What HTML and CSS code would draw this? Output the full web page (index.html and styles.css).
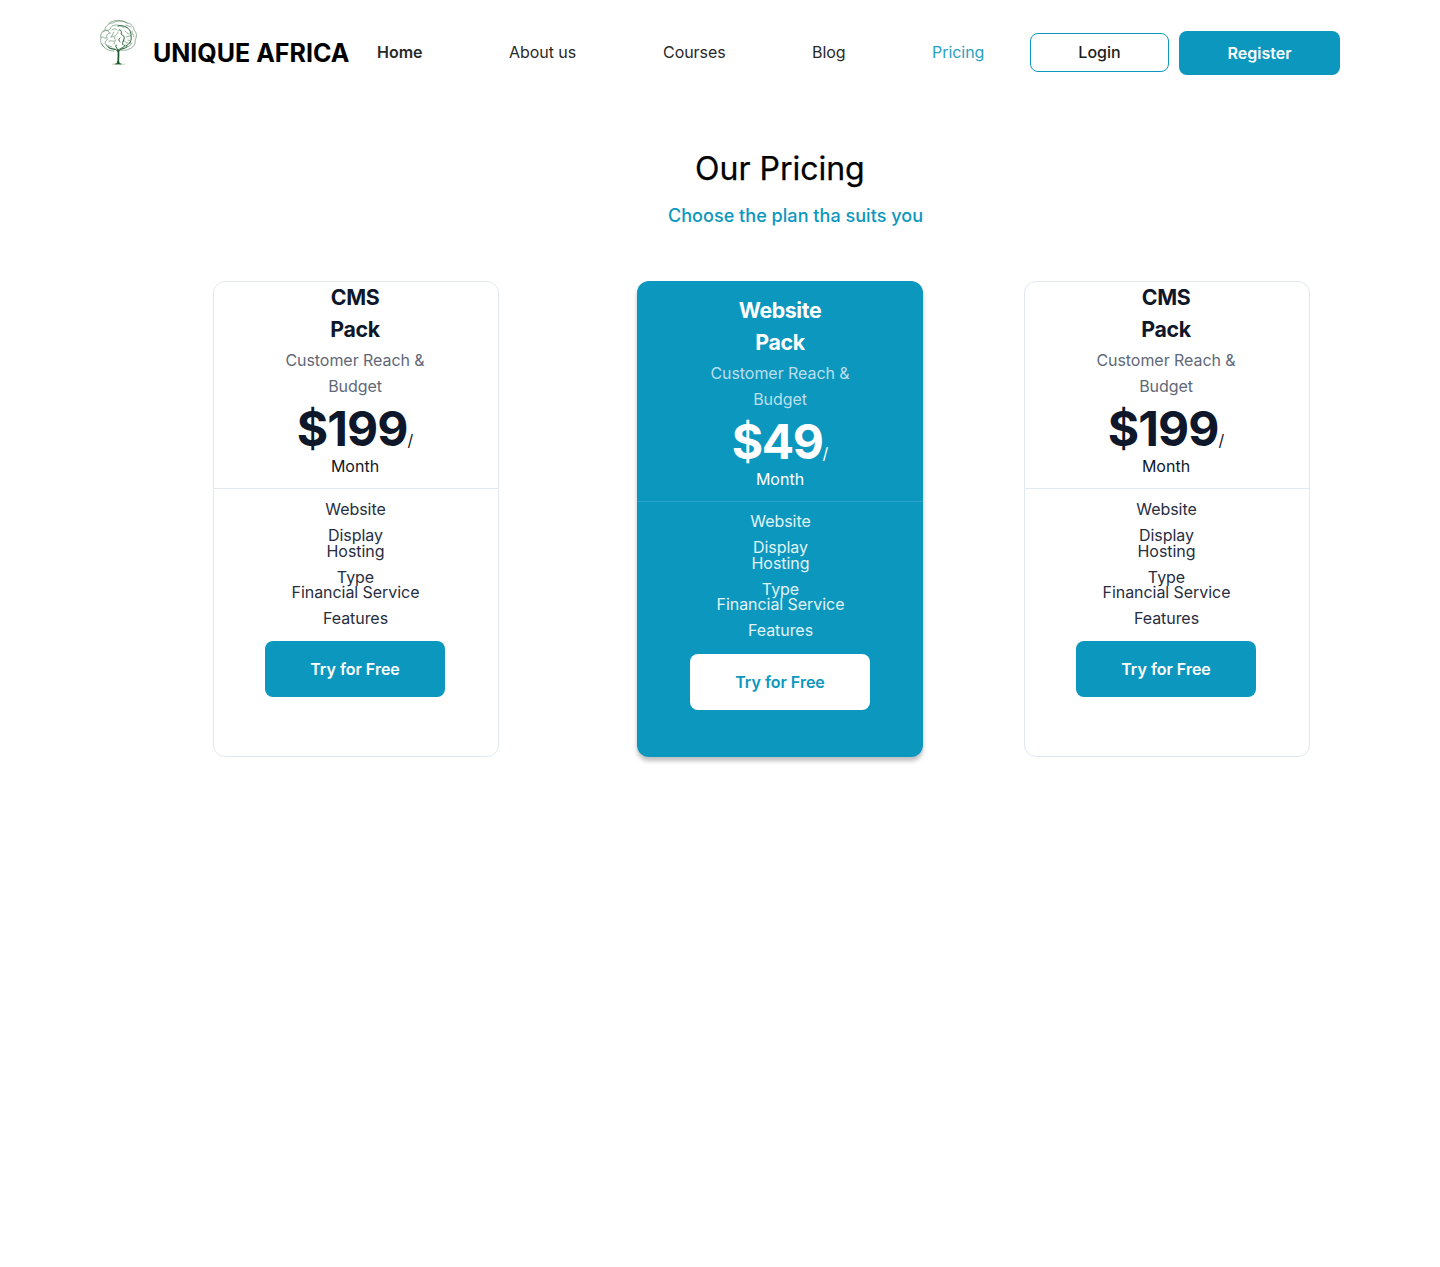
FILE: index.html
```html
<!DOCTYPE html>
<html lang="en">
<head>
<meta charset="utf-8">
<title>Unique Africa - Pricing</title>
<link rel="stylesheet" href="styles.css">
</head>
<body>
<header class="header">
  <a class="brand">
    <svg class="brand-tree" viewBox="0 0 40 48" fill="none" stroke="#1d5a2c" stroke-linecap="round" stroke-linejoin="round">
      <g stroke-width=".65" opacity=".72">
        <path d="M6 29C3 27 2 23 3 20c-1-4 1-7 4-8 0-4 4-7 8-7 4-3 11-2 14 0 4 0 7 4 7 7 3 3 3 7 1 10 1 4-2 8-6 9-3 2-6 1-9 1"/>
        <path d="M4 26c2 5 7 7 12 7M3 19c2-1 3 2 5 1M8 12c3 1 5-1 5-3M11 5c4-3 13-4 18 0M14 8c4-2 9-1 12 2"/>
        <path d="M5 14c3-3 6-1 7 1M12 15c-3 0-4 3-3 5s-2 3-2 5 4 3 7 4M14 12c2-2 4-1 5 0M16 14c-2 2-1 4-3 5M13 19c2-1 4 0 4 2M11 23c2-1 3 1 5 0M16 26c1-2 0-3 2-4M20 14c0 3-4 2-3 5"/>
        <path d="M27 13c2 1 2 3 4 3M28 19c2-1 4 0 5-2M30 22c2 0 3 2 2 4M34 13c-1 3 2 3 2 6M25 23c3-1 2 3 5 2M17 31c-4 0-7-1-9-4M28 29c3 0 5-2 6-4M33 9c-2 0-3-2-5-2"/>
      </g>
      <g stroke-width=".95">
        <path d="M21 12c2-1 3 2 2 4 2 1 4 3 3 5-1 3-2 4-1 6M22 20c-2 1-1 3 0 4M28 9c4 2 5 5 5 9 1 4-1 8-5 10M20 8c3-1 6 0 8 1"/>
        <path d="M20 33c-2-3-8-1-10-4M20 33c0-3-3-3-2-6M20 33c2-4 6-2 7-6M21 33c2-3 6-2 8-4"/>
      </g>
      <path d="M20.3 32c.4 4 .1 9-.2 13" stroke-width="1.7"/>
      <path d="M17.5 46c2-.3 2-1.500 2.300-3h1c.2 1.500.6 2.700 2.200 3z" fill="#1d5a2c" stroke-width=".5"/>
      <path d="M14.500 46.200h12" stroke-width=".5" opacity=".6"/>
    </svg>
    <span class="brand-name">UNIQUE AFRICA</span>
  </a>
  <nav class="nav">
    <a class="nav-link nav-home">Home</a>
    <a class="nav-link nav-about">About us</a>
    <a class="nav-link nav-courses">Courses</a>
    <a class="nav-link nav-blog">Blog</a>
    <a class="nav-link nav-pricing">Pricing</a>
  </nav>
  <div class="actions">
    <button class="login">Login</button>
    <button class="register">Register</button>
  </div>
</header>
<main>
  <div class="intro">
    <h1 class="intro-title">Our Pricing</h1>
    <p class="intro-text">Choose the plan tha suits you</p>
  </div>
  <section class="plans">
    <article class="plan">
      <h2 class="plan-name">CMS<br>Pack</h2>
      <p class="plan-desc">Customer Reach &amp;<br>Budget</p>
      <p class="plan-price"><strong class="amount">$199</strong>/</p>
      <p class="plan-period">Month</p>
      <ul class="features">
        <li>Website<br>Display</li>
        <li>Hosting<br>Type</li>
        <li>Financial Service<br>Features</li>
      </ul>
      <button class="try">Try for Free</button>
    </article>
    <article class="plan plan-featured">
      <h2 class="plan-name">Website<br>Pack</h2>
      <p class="plan-desc">Customer Reach &amp;<br>Budget</p>
      <p class="plan-price"><strong class="amount">$49</strong>/</p>
      <p class="plan-period">Month</p>
      <ul class="features">
        <li>Website<br>Display</li>
        <li>Hosting<br>Type</li>
        <li>Financial Service<br>Features</li>
      </ul>
      <button class="try">Try for Free</button>
    </article>
    <article class="plan">
      <h2 class="plan-name">CMS<br>Pack</h2>
      <p class="plan-desc">Customer Reach &amp;<br>Budget</p>
      <p class="plan-price"><strong class="amount">$199</strong>/</p>
      <p class="plan-period">Month</p>
      <ul class="features">
        <li>Website<br>Display</li>
        <li>Hosting<br>Type</li>
        <li>Financial Service<br>Features</li>
      </ul>
      <button class="try">Try for Free</button>
    </article>
  </section>
</main>
</body>
</html>
```
FILE: styles.css
```css
* { box-sizing: border-box; margin: 0; padding: 0; }

body {
  min-height: 1267px;
  background: #fff;
  color: #0f172a;
  font: 400 16px/26px Inter, "Liberation Sans", sans-serif;
}

button { border: 0; font: inherit; }

.header {
  display: flex;
  height: 106px;
  padding-left: 98px;
  white-space: nowrap;
}

.brand { display: flex; width: 279px; }
.brand-tree { width: 40px; height: 48px; margin-top: 18px; }
.brand-name {
  margin: 37px 0 0 15px;
  color: #000;
  font-size: 25px;
  font-weight: 700;
  line-height: 32px;
}

.nav {
  display: grid;
  grid-template-columns: 132px 154px 149px 120px 98px;
  padding-top: 39px;
}
.nav-link { color: #292929; letter-spacing: -.05px; }
.nav-home { font-weight: 600; letter-spacing: 0; }
.nav-pricing { color: #2aa0c4; }

.actions { display: flex; gap: 10px; align-items: flex-start; padding-top: 31px; }
.login {
  width: 139px;
  height: 39px;
  margin-top: 2px;
  padding-bottom: 2px;
  border: 1px solid #0c97bf;
  border-radius: 8px;
  background: #fff;
  color: #1c1c1c;
  font-weight: 500;
}
.register {
  width: 161px;
  height: 44px;
  border-radius: 8px;
  background: #0c97bf;
  color: #fff;
  font-weight: 600;
}

.intro { display: grid; padding: 42px 0 0 668px; }
.intro-title {
  margin-left: 27px;
  color: #000;
  font-size: 32px;
  font-weight: 400;
  line-height: 42px;
  -webkit-text-stroke: .25px #000;
}
.intro-text {
  margin-top: 13px;
  color: #0c97bf;
  font-size: 18px;
  font-weight: 500;
  letter-spacing: .04px;
}

.plans {
  display: grid;
  grid-template-columns: 286px 286px 286px;
  column-gap: 138px;
  padding: 52px 0 0 213px;
}
.plan:last-child { margin-left: -37px; margin-right: 37px; }

.plan {
  display: flex;
  flex-direction: column;
  align-items: center;
  height: 476px;
  padding-right: 2px;
  border: 1px solid #e2e8f0;
  border-radius: 12px;
  text-align: center;
}
.plan-name {
  margin-top: -1px;
  font-size: 21.33px;
  font-weight: 700;
  line-height: 32px;
  letter-spacing: -.4px;
}
.plan-desc {
  margin-top: 2px;
  color: #5f6878;
  letter-spacing: -.06px;
}
.plan-price { height: 54px; line-height: 59px; }
.amount {
  font-size: 48px;
  font-weight: 700;
  letter-spacing: -.96px;
}
.plan-period {
  align-self: stretch;
  height: 36px;
  margin-right: -2px;
  padding-right: 2px;
  border-bottom: 1px solid #e2e8f0;
}
.features {
  padding: 7px 0 0 1px;
  color: #272e3f;
  letter-spacing: -.05px;
  list-style: none;
}
.features li { height: 41.5px; }
.try {
  width: 180px;
  height: 56px;
  margin-top: 20px;
  border-radius: 8px;
  background: #0c97bf;
  color: #fff;
  font-weight: 600;
}

.plan-featured {
  padding-top: 14px;
  padding-right: 0;
  border: 0;
  background: #0c97bf;
  box-shadow: 0 4px 4px rgba(0, 0, 0, .25);
  color: #fff;
}
.plan-featured .plan-desc { color: #b9dfed; }
.plan-featured .amount { letter-spacing: -1.4px; }
.plan-featured .plan-period {
  margin-right: 0;
  padding-right: 0;
  border-color: #2aa4c8;
}
.plan-featured .features { padding: 6px 0 0 1px; color: #e2f3f8; }
.plan-featured .try { margin-top: 21px; background: #fff; color: #0c97bf; }
```
